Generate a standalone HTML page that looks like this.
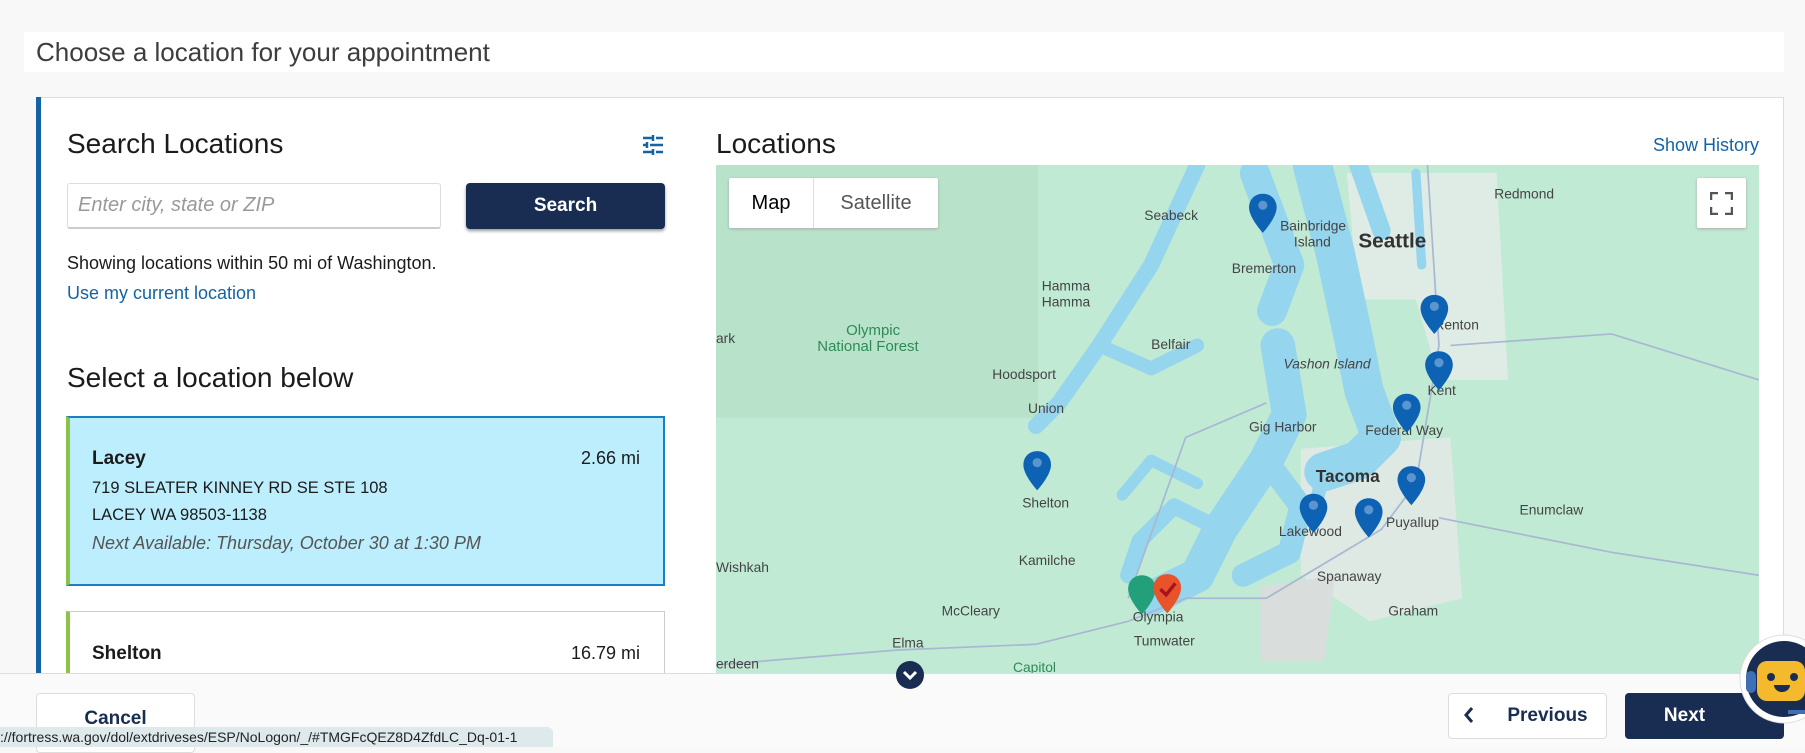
<!DOCTYPE html>
<html><head><meta charset="utf-8"><style>
*{box-sizing:border-box;margin:0;padding:0}
body{width:1805px;height:747px;overflow:hidden;background:#f8f8f8;font-family:"Liberation Sans",sans-serif;position:relative;color:#1b1b1b}
.abs{position:absolute}
.title{left:24px;top:32px;width:1760px;height:40px;background:#fff;font-size:26px;color:#3d3d3d;padding-left:12px;line-height:40px}
.panel{left:36px;top:97px;width:1748px;height:590px;background:#fff;border-top:1px solid #ddd;border-right:1px solid #ddd}
.bar{left:36px;top:97px;width:5px;height:576px;background:#1463a5}
h2{position:absolute;font-weight:normal;font-size:28px;color:#1b1b1b}
.btn{position:absolute;border-radius:4px;font-weight:bold;font-size:19px;text-align:center}
.card{position:absolute;left:66px;width:599px}
</style></head><body>
<div class="abs title">Choose a location for your appointment</div>
<div class="abs panel"></div>
<div class="abs bar"></div>
<h2 style="left:67px;top:128px">Search Locations</h2>
<svg class="abs" style="left:641px;top:134px" width="24" height="22" viewBox="0 0 24 22"><g stroke="#1463a5" stroke-width="2.5"><path d="M2 4h10M15 4h7M12 1v6M2 11h4M9 11h13M6 8v6M2 18h10M15 18h7M12 15v6"/></g></svg>
<div class="abs" style="left:67px;top:183px;width:374px;height:46px;border:1px solid #ddd;border-bottom:2px solid #ccc;border-radius:3px;font-style:italic;color:#999;font-size:20px;padding:10px 10px">Enter city, state or ZIP</div>
<div class="btn" style="left:466px;top:183px;width:199px;height:46px;background:#182d51;color:#fff;line-height:46px;box-shadow:0 2px 3px #999">Search</div>
<div class="abs" style="left:67px;top:253px;font-size:18px">Showing locations within 50 mi of Washington.</div>
<div class="abs" style="left:67px;top:283px;font-size:18px;color:#1463a5">Use my current location</div>
<h2 style="left:67px;top:362px">Select a location below</h2>
<div class="card" style="top:416px;height:170px;background:#bdeefd;border:2px solid #1a80c4;border-left:4px solid #8bc34a"></div>
<div class="abs" style="left:92px;top:448px;font-size:19px;font-weight:bold">Lacey</div>
<div class="abs" style="right:1165px;top:448px;font-size:18px">2.66 mi</div>
<div class="abs" style="left:92px;top:479px;font-size:16.5px">719 SLEATER KINNEY RD SE STE 108</div>
<div class="abs" style="left:92px;top:506px;font-size:16.5px">LACEY WA 98503-1138</div>
<div class="abs" style="left:92px;top:533px;font-size:18px;font-style:italic;color:#555">Next Available: Thursday, October 30 at 1:30 PM</div>
<div class="card" style="top:611px;height:80px;background:#fff;border:1px solid #ccc;border-left:4px solid #8bc34a"></div>
<div class="abs" style="left:92px;top:643px;font-size:19px;font-weight:bold">Shelton</div>
<div class="abs" style="right:1165px;top:643px;font-size:18px">16.79 mi</div>

<h2 style="left:716px;top:128px">Locations</h2>
<div class="abs" style="right:46px;top:135px;font-size:18px;color:#1463a5">Show History</div>
<svg class="abs" style="left:716px;top:165px" width="1043" height="508" viewBox="622 143 906 442" preserveAspectRatio="none" font-family="Liberation Sans,sans-serif" font-size="12" fill="#444">
<rect x="622" y="143" width="906" height="442" fill="#c1ead4"/>
<rect x="622" y="143" width="280" height="220" fill="#b8e3ca"/>
<path d="M1170 150 L1300 150 L1310 330 L1250 330 L1230 260 L1180 260Z" fill="#dfece5"/>
<path d="M1130 390 L1260 380 L1270 520 L1190 540 L1130 500Z" fill="#dfe9e4"/>
<path d="M1095 510 L1160 500 L1150 575 L1095 575Z" fill="#d9dedc"/>
<g fill="none" stroke="#96d5ee" stroke-linejoin="round" stroke-linecap="round">
<path d="M1140 143 L1160 220 L1175 290 L1185 340 L1200 380 L1180 400 L1150 410" stroke-width="34"/>
<path d="M1090 150 L1120 230 L1105 270" stroke-width="26"/>
<path d="M1040 143 L1000 230 L955 300 L920 350 L900 370" stroke-width="14"/>
<path d="M955 300 L1000 320 L1040 300" stroke-width="12"/>
<path d="M1110 300 L1120 360 L1100 400 L1080 430 L1060 460 L1040 500 L1000 520" stroke-width="30"/>
<path d="M1100 400 L1130 440 L1120 480 L1080 500" stroke-width="20"/>
<path d="M1060 460 L1020 440 L990 470 L980 500" stroke-width="14"/>
<path d="M1040 420 L1000 400 L975 430" stroke-width="10"/>
<path d="M1150 410 L1140 450" stroke-width="12"/>
<path d="M1230 150 L1235 230" stroke-width="8"/>
<path d="M1180 143 L1200 200" stroke-width="16"/>
</g>
<g fill="none" stroke="#a8b8d2" stroke-width="1.5">
<path d="M1240 143 L1250 300 L1230 420 L1200 460 L1100 520 L1030 520 L980 540 L900 560 L780 565 L622 578"/>
<path d="M1260 300 L1400 290 L1528 330"/>
<path d="M1100 350 L1030 380 L980 520"/>
<path d="M1250 450 L1400 480 L1528 500"/>
</g>
<g font-size="12">
<text x="994" y="191">Seabeck</text><text x="1112" y="200">Bainbridge</text><text x="1124" y="214">Island</text>
<text x="1180" y="215" font-size="18" font-weight="bold" fill="#333">Seattle</text><text x="1298" y="172">Redmond</text>
<text x="1070" y="237">Bremerton</text><text x="905" y="252">Hamma</text><text x="905" y="266">Hamma</text>
<text x="735" y="291" fill="#2e8b57" font-size="13">Olympic</text><text x="710" y="305" fill="#2e8b57" font-size="13">National Forest</text>
<text x="1000" y="303">Belfair</text><text x="1115" y="320" font-style="italic">Vashon Island</text><text x="862" y="329">Hoodsport</text>
<text x="893" y="359">Union</text><text x="1085" y="375">Gig Harbor</text><text x="1186" y="378">Federal Way</text>
<text x="1240" y="343">Kent</text><text x="1246" y="286">Renton</text>
<text x="1143" y="419" font-size="15" font-weight="bold" fill="#333">Tacoma</text>
<text x="888" y="441">Shelton</text><text x="1111" y="466">Lakewood</text><text x="1204" y="458">Puyallup</text>
<text x="1320" y="447">Enumclaw</text><text x="1144" y="505">Spanaway</text><text x="885" y="491">Kamilche</text>
<text x="622" y="497">Wishkah</text><text x="818" y="535">McCleary</text><text x="984" y="540">Olympia</text>
<text x="985" y="561">Tumwater</text><text x="775" y="563">Elma</text><text x="1206" y="535">Graham</text>
<text x="880" y="584" fill="#2e8b57">Capitol</text><text x="622" y="581">erdeen</text><text x="622" y="298">ark</text>
</g>
<g id="p" fill="#0d62b3"><path d="M0 0c-7 0-12 5-12 12c0 9 12 22 12 22s12-13 12-22c0-7-5-12-12-12z"/><circle cy="10" r="4" fill="#5a95d0"/></g>
<g>
<use href="#p" x="1097" y="168"/><use href="#p" x="1246" y="256"/><use href="#p" x="1250" y="305"/><use href="#p" x="1222" y="342"/>
<use href="#p" x="901" y="392"/><use href="#p" x="1226" y="405"/><use href="#p" x="1141" y="429"/><use href="#p" x="1189" y="433"/>
</g>
<path d="M992 500c-7 0-12 5-12 12c0 9 12 22 12 22s12-13 12-22c0-7-5-12-12-12z" fill="#23a07a"/>
<path d="M1014 499c-7 0-12 5-12 12c0 9 12 22 12 22s12-13 12-22c0-7-5-12-12-12z" fill="#e8542a"/>
<path d="M1008 512l5 5l8-10" stroke="#a12" stroke-width="3" fill="none"/>
</svg>
<div class="abs" style="left:729px;top:178px;width:209px;height:50px;background:#fff;box-shadow:0 1px 3px #aaa;border-radius:2px"></div>
<div class="abs" style="left:729px;top:178px;width:85px;height:50px;line-height:50px;text-align:center;font-size:20px;color:#000;border-right:1px solid #ddd">Map</div>
<div class="abs" style="left:814px;top:178px;width:124px;height:50px;line-height:50px;text-align:center;font-size:20px;color:#555">Satellite</div>
<div class="abs" style="left:1697px;top:178px;width:49px;height:50px;background:#fff;box-shadow:0 1px 3px #aaa;border-radius:2px"></div>
<svg class="abs" style="left:1710px;top:192px" width="23" height="23" viewBox="0 0 23 23"><path d="M1 8V1h7M15 1h7v7M22 15v7h-7M8 22H1v-7" stroke="#555" stroke-width="2.5" fill="none"/></svg>

<div class="abs" style="left:0;top:673px;width:1805px;height:74px;background:#fafafa;border-top:1px solid #ddd"></div>
<svg class="abs" style="left:895px;top:660px" width="30" height="30"><circle cx="15" cy="15" r="14" fill="#182d51"/><path d="M9 12l6 6l6-6" stroke="#fff" stroke-width="3" fill="none"/></svg>
<div class="btn" style="left:36px;top:693px;width:159px;height:60px;background:#fff;border:1px solid #ddd;color:#182d51;line-height:50px">Cancel</div>
<div class="abs" style="left:0;top:727px;width:553px;height:20px;background:#dee9ec;border-radius:0 6px 0 0;font-size:14px;line-height:20px;color:#222;white-space:nowrap;overflow:hidden">://fortress.wa.gov/dol/extdriveses/ESP/NoLogon/_/#TMGFcQEZ8D4ZfdLC_Dq-01-1</div>
<div class="btn" style="left:1448px;top:693px;width:159px;height:46px;background:#fff;border:1px solid #ddd;color:#182d51;line-height:44px;padding-left:40px">Previous</div>
<svg class="abs" style="left:1462px;top:706px" width="14" height="18"><path d="M10 2L4 9l6 7" stroke="#182d51" stroke-width="3" fill="none"/></svg>
<div class="btn" style="left:1625px;top:693px;width:159px;height:46px;background:#182d51;color:#fff;line-height:46px;padding-right:40px">Next</div>
<svg class="abs" style="left:1738px;top:633px" width="67" height="92"><circle cx="46" cy="46" r="44" fill="#fff" stroke="#ddd"/><circle cx="46" cy="46" r="38" fill="#182d51"/><rect x="19" y="28" width="48" height="40" rx="10" fill="#f5b92e"/><rect x="8" y="38" width="10" height="22" rx="5" fill="#3f6fb4"/><circle cx="33" cy="44" r="4" fill="#182d51"/><circle cx="56" cy="44" r="4" fill="#182d51"/><path d="M36 52h16a8 7 0 0 1-16 0z" fill="#182d51"/><rect x="50" y="77" width="17" height="4" fill="#3f6fb4"/></svg>
</body></html>
